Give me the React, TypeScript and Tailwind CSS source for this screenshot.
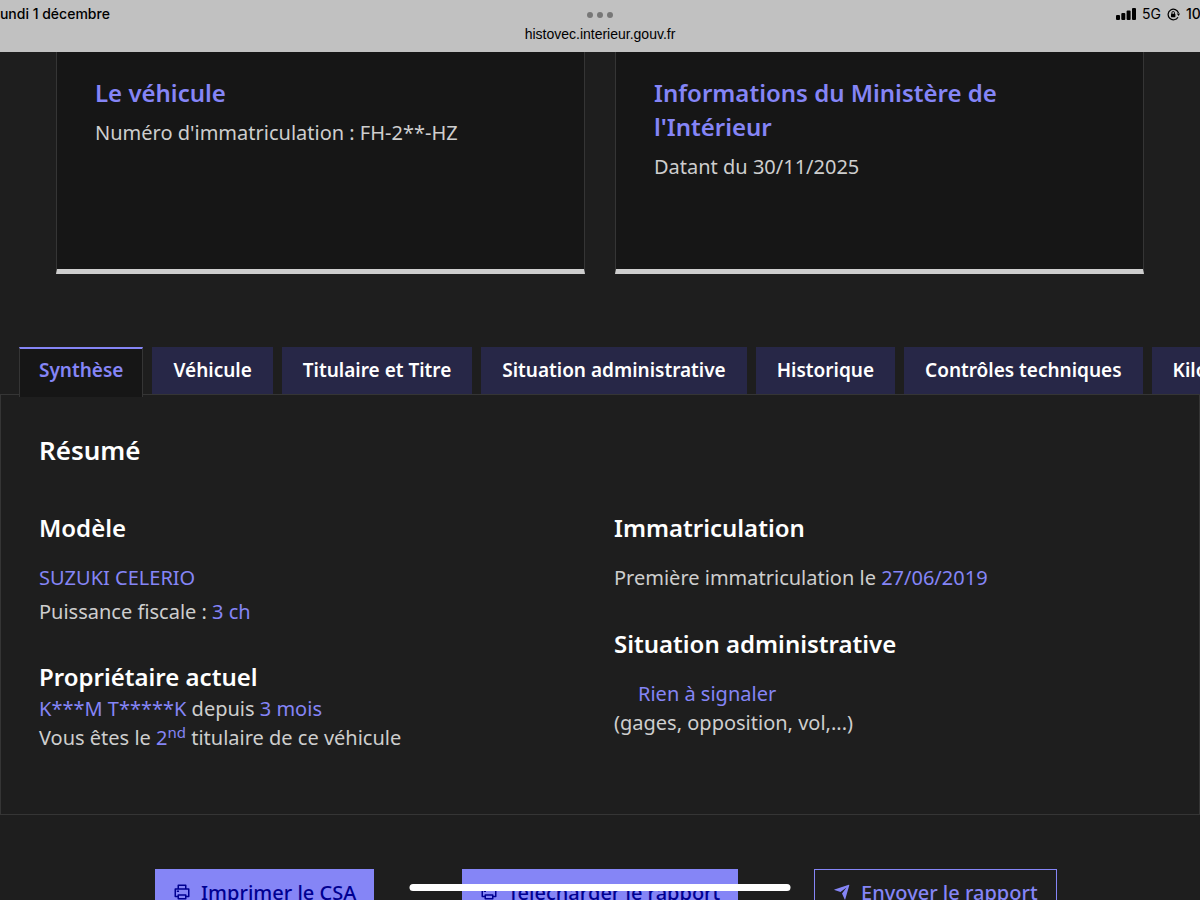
import React, { useState } from 'react';

interface Tab {
  id: string;
  label: string;
}

const tabs: Tab[] = [
  { id: 'synthese', label: 'Synthèse' },
  { id: 'vehicule', label: 'Véhicule' },
  { id: 'titulaire', label: 'Titulaire et Titre' },
  { id: 'situation', label: 'Situation administrative' },
  { id: 'historique', label: 'Historique' },
  { id: 'controles', label: 'Contrôles techniques' },
  { id: 'kilometrage', label: 'Kilométrage' },
];

const StatusBar: React.FC = () => (
  <header className="grid h-[52px] shrink-0 grid-cols-[1fr_auto_1fr] overflow-hidden bg-[#c1c1c1] font-['Inter',sans-serif] text-sm leading-7 text-black">
    <div className="-ml-2 whitespace-nowrap font-medium">Lundi 1 décembre</div>
    <div className="flex flex-col items-center pt-3">
      <div className="flex gap-1">
        <span className="size-1.5 rounded-full bg-[#777777]" />
        <span className="size-1.5 rounded-full bg-[#777777]" />
        <span className="size-1.5 rounded-full bg-[#777777]" />
      </div>
      <p className="font-['Liberation_Sans',sans-serif] leading-8">histovec.interieur.gouv.fr</p>
    </div>
    <div className="-mr-1 flex h-7 w-[88px] items-center gap-1.5 justify-self-end whitespace-nowrap">
      <svg width="20" height="12" viewBox="0 0 20 12" className="shrink-0">
        <rect x="0" y="7" width="4" height="5" rx="1" />
        <rect x="5.3" y="5" width="4" height="7" rx="1" />
        <rect x="10.6" y="2.6" width="4" height="9.4" rx="1" />
        <rect x="16" y="0" width="4" height="12" rx="1" />
      </svg>
      <span>5G</span>
      <svg width="13" height="13" viewBox="0 0 13 13" className="shrink-0" fill="none" stroke="black">
        <path d="M11 9.2A5.3 5.3 0 1 1 11.5 5" strokeWidth="1.2" />
        <path d="M9.8 5.4H13l-1.4 2.5z" fill="black" stroke="none" />
        <rect x="4" y="5.8" width="4.4" height="3.4" rx="0.6" fill="black" stroke="none" />
        <path d="M4.9 6V4.8a1.3 1.3 0 0 1 2.6 0V6" strokeWidth="0.9" />
      </svg>
      <span className="font-medium">10</span>
    </div>
  </header>
);

const InfoCard: React.FC<{ title: string; text: string }> = ({ title, text }) => (
  <article className="border-x border-b-5 border-x-[#353535] border-b-[#cecece] bg-[#161616] px-[38px] pt-6 pb-[88px]">
    <h3 className="text-2xl leading-[34px] font-semibold text-[#8585f6]">{title}</h3>
    <p className="mt-2">{text}</p>
  </article>
);

const PrinterIcon: React.FC = () => (
  <svg width="18" height="18" viewBox="0 0 24 24" className="shrink-0" fill="currentColor">
    <path d="M6 19H3a1 1 0 0 1-1-1V8a1 1 0 0 1 1-1h3V3a1 1 0 0 1 1-1h10a1 1 0 0 1 1 1v4h3a1 1 0 0 1 1 1v10a1 1 0 0 1-1 1h-3v2a1 1 0 0 1-1 1H7a1 1 0 0 1-1-1v-2zm0-2v-1a1 1 0 0 1 1-1h10a1 1 0 0 1 1 1v1h2V9H4v8h2zM8 4v3h8V4H8zm0 13v3h8v-3H8zm-3-7h3v2H5v-2z" />
  </svg>
);

const SendIcon: React.FC = () => (
  <svg width="18" height="18" viewBox="0 0 24 24" className="shrink-0" fill="currentColor">
    <path d="M1.95 9.32c-.53-.18-.53-.46.01-.64L21.04 2.3c.53-.17.83.12.68.64l-5.45 19.08c-.15.53-.46.55-.68.06L12 14l6-8-8 6-8.05-2.68z" />
  </svg>
);

const Value: React.FC<{ children: React.ReactNode }> = ({ children }) => (
  <span className="text-[#8585f6]">{children}</span>
);

const App: React.FC = () => {
  const [active, setActive] = useState('synthese');

  return (
    <div className="flex h-screen flex-col overflow-hidden bg-[#1e1e1e] font-['Noto_Sans',sans-serif] text-xl leading-[29px] text-[#cecece]">
      <StatusBar />

      <main className="min-h-0 flex-1 overflow-hidden">
        <section className="grid grid-cols-2 gap-[30px] px-14">
          <InfoCard title="Le véhicule" text="Numéro d'immatriculation : FH-2**-HZ" />
          <InfoCard title="Informations du Ministère de l'Intérieur" text="Datant du 30/11/2025" />
        </section>

        <div role="tablist" className="mt-[73px] flex h-[47px] gap-[9px] pl-[19px] text-[19px]">
          {tabs.map((tab) => (
            <button
              key={tab.id}
              type="button"
              role="tab"
              aria-selected={active === tab.id}
              onClick={() => setActive(tab.id)}
              className={
                active === tab.id
                  ? 'relative h-[50px] shrink-0 border-x border-t-2 border-x-[#353535] border-t-[#8585f6] bg-[#161616] px-[19px] pb-1.5 font-semibold whitespace-nowrap text-[#8585f6]'
                  : 'h-[47px] shrink-0 bg-[#272747] px-[21px] font-semibold whitespace-nowrap text-white'
              }
            >
              {tab.label}
            </button>
          ))}
        </div>

        <section className="border border-[#353535] px-[38px] pt-[38px] pb-[62px]">
          <h2 className="text-[26px] leading-[34px] font-semibold text-white">Résumé</h2>
          <div className="mt-11 grid grid-cols-2 gap-7">
            <div>
              <h3 className="text-2xl leading-[34px] font-semibold text-white">Modèle</h3>
              <p className="mt-[18px]">
                <Value>SUZUKI CELERIO</Value>
              </p>
              <p className="mt-[5px]">
                Puissance fiscale : <Value>3 ch</Value>
              </p>
              <h3 className="mt-[34px] text-2xl leading-[34px] font-semibold text-white">Propriétaire actuel</h3>
              <p>
                <Value>K***M T*****K</Value> depuis <Value>3 mois</Value>
              </p>
              <p>
                Vous êtes le{' '}
                <Value>
                  2<sup>nd</sup>
                </Value>{' '}
                titulaire de ce véhicule
              </p>
            </div>
            <div>
              <h3 className="text-2xl leading-[34px] font-semibold text-white">Immatriculation</h3>
              <p className="mt-[18px]">
                Première immatriculation le <Value>27/06/2019</Value>
              </p>
              <h3 className="mt-[35px] text-2xl leading-[34px] font-semibold text-white">Situation administrative</h3>
              <p className="mt-[18px] pl-6">
                <Value>Rien à signaler</Value>
              </p>
              <p>(gages, opposition, vol,...)</p>
            </div>
          </div>
        </section>

        <div className="mt-[54px] grid grid-cols-3 justify-items-center px-[97px] font-medium">
          <button type="button" className="flex h-[46px] items-center gap-2.5 bg-[#8585f6] px-[18px] whitespace-nowrap text-[#000091]">
            <PrinterIcon />
            Imprimer le CSA
          </button>
          <button type="button" className="flex h-[46px] items-center gap-2.5 bg-[#8585f6] px-[18px] whitespace-nowrap text-[#000091]">
            <PrinterIcon />
            Télécharger le rapport
          </button>
          <button type="button" className="flex h-[46px] items-center gap-2.5 border border-[#8585f6] px-[18px] whitespace-nowrap text-[#8585f6]">
            <SendIcon />
            Envoyer le rapport
          </button>
        </div>
      </main>

      <div className="fixed bottom-[9px] left-1/2 h-[7px] w-[381px] -translate-x-1/2 rounded-full bg-white" />
    </div>
  );
};

export default App;
